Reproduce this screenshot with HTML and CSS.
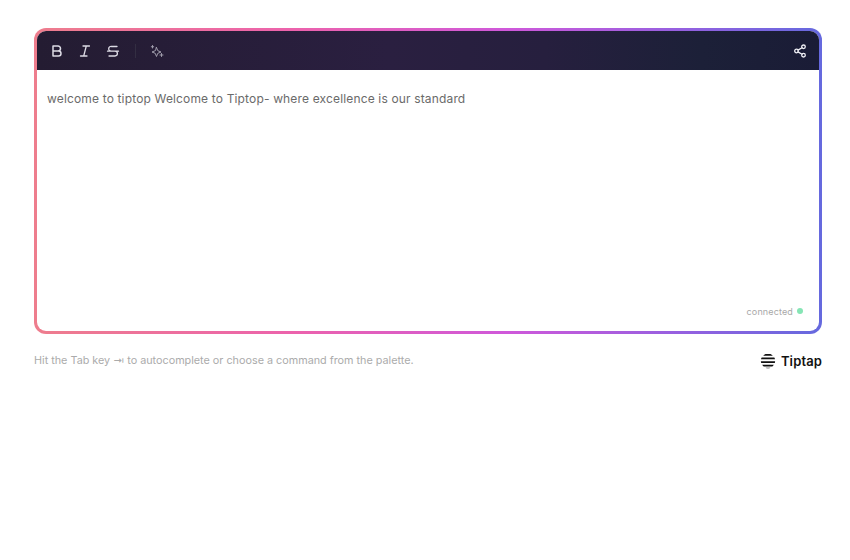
FILE: index.html
```html
<!DOCTYPE html>
<html lang="en">
<head>
<meta charset="utf-8">
<title>Tiptap editor</title>
<link rel="stylesheet" href="styles.css">
</head>
<body>
<main class="page">
  <section class="frame">
    <div class="editor">
      <div class="toolbar">
        <div class="tools">
          <svg class="icon bold" viewBox="0 0 14 14"><path d="M3 2h5a2.500 2.500 0 0 1 0 5H3zM3 7h5.500a2.500 2.500 0 0 1 0 5H3z"/></svg>
          <svg class="icon" viewBox="0 0 14 14"><path d="M5 2h6.500M2.500 12H9M8.300 2 5.700 12"/></svg>
          <svg class="icon" viewBox="0 0 14 14"><path d="M11 2.500H5.500a2.300 2.300 0 0 0-1 4.500M1.500 7.200h11M9 7.200a2.400 2.400 0 0 1 0 4.800H3"/></svg>
          <span class="divider"></span>
          <svg class="icon spark" viewBox="0 0 14 14"><path d="M6.500 3.500l1.300 3.200 3.200 1.300-3.200 1.300-1.300 3.200-1.300-3.200L2 8l3.200-1.300z"/><path d="M2.500 1.500v2.500M1.300 2.750h2.400M11.500 9.500v3M10 11h3"/></svg>
        </div>
        <svg class="icon share" viewBox="0 0 14 14"><circle cx="10.500" cy="2.800" r="1.800"/><circle cx="3.500" cy="7" r="1.800"/><circle cx="10.500" cy="11.200" r="1.800"/><path d="M5 6.100 9 3.700M5 7.900l4 2.400"/></svg>
      </div>
      <div class="content">
        <p class="text">welcome to tiptop Welcome to Tiptop- where excellence is our standard</p>
        <div class="status">connected <span class="dot"></span></div>
      </div>
    </div>
  </section>
  <footer class="foot">
    <p class="hint">Hit the Tab key ⇥ to autocomplete or choose a command from the palette.</p>
    <div class="brand">
      <svg class="logo" viewBox="0 0 16 16"><path d="M5.500 1h5a7.500 7.500 0 0 1 2.300 1.700H3.200A7.500 7.500 0 0 1 5.500 1zM1.700 4.600h12.600q.5.800.7 1.700H1q.2-.9.700-1.700zM.9 8.200h14.200q0 .9-.3 1.700H1.200q-.3-.8-.3-1.700zM2.200 11.800h11.600q-.6.900-1.500 1.700H3.700q-.9-.8-1.500-1.700zM5.500 14.700h5q-1.200.5-2.500.5t-2.500-.5z"/></svg>
      <span class="brand-name">Tiptap</span>
    </div>
  </footer>
</main>
</body>
</html>
```

FILE: styles.css
```css
* { box-sizing: border-box; }
html, body { margin: 0; background: #fff; }
body { font-family: Inter, "Liberation Sans", sans-serif; }
.page { width: 850px; height: 560px; padding: 28px 28px 0 34px; }
.frame {
  height: 306px;
  padding: 3px;
  border-radius: 12px;
  background: linear-gradient(90deg, #ee7d8d 0%, #ec62ac 33%, #cf58da 60%, #9560e0 82%, #6569de 100%);
}
.editor {
  height: 100%;
  display: flex;
  flex-direction: column;
  background: #fff;
  border-radius: 9px;
  overflow: hidden;
}
.toolbar {
  height: 39px;
  flex: none;
  display: flex;
  align-items: center;
  justify-content: space-between;
  padding: 0 13px;
  background: linear-gradient(90deg, #241c32, #2a1f40 45%, #261f3e 65%, #1c2038 85%, #1a1c36);
}
.tools { display: flex; align-items: center; gap: 14px; }
.icon {
  width: 14px;
  height: 14px;
  fill: none;
  stroke: #dcdae4;
  stroke-width: 1.300;
  stroke-linecap: round;
  stroke-linejoin: round;
}
.bold { stroke-width: 1.500; }
.spark { stroke: #a09dac; stroke-width: 1; }
.divider { width: 1px; height: 14px; background: #332e42; margin-left: 1px; }
.share { stroke: #eeeef4; transform: translateX(1px); }
.content { flex: 1; display: flex; flex-direction: column; padding: 21px 9px 0 10px; }
.text { margin: 0; font-size: 12px; line-height: 16px; color: #6a6a6a; flex: 1; letter-spacing: 0.0129em; }
.status {
  display: flex;
  align-items: center;
  justify-content: flex-end;
  gap: 4px;
  height: 14px;
  margin: 0 7px 13px 0;
  font-size: 9px;
  letter-spacing: 0.015em;
  color: #a8a8a8;
}
.dot { width: 6px; height: 6px; border-radius: 50%; background: #86e5b5; }
.foot { display: flex; justify-content: space-between; align-items: center; margin-top: 18px; height: 17px; }
.hint { margin: 0; font-size: 10.800px; color: #ababab; }
.brand { display: flex; align-items: center; gap: 5px; }
.logo { width: 16px; height: 16px; fill: #111; }
.brand-name { font-size: 13px; font-weight: 600; color: #111; letter-spacing: 0.01em; }
```
